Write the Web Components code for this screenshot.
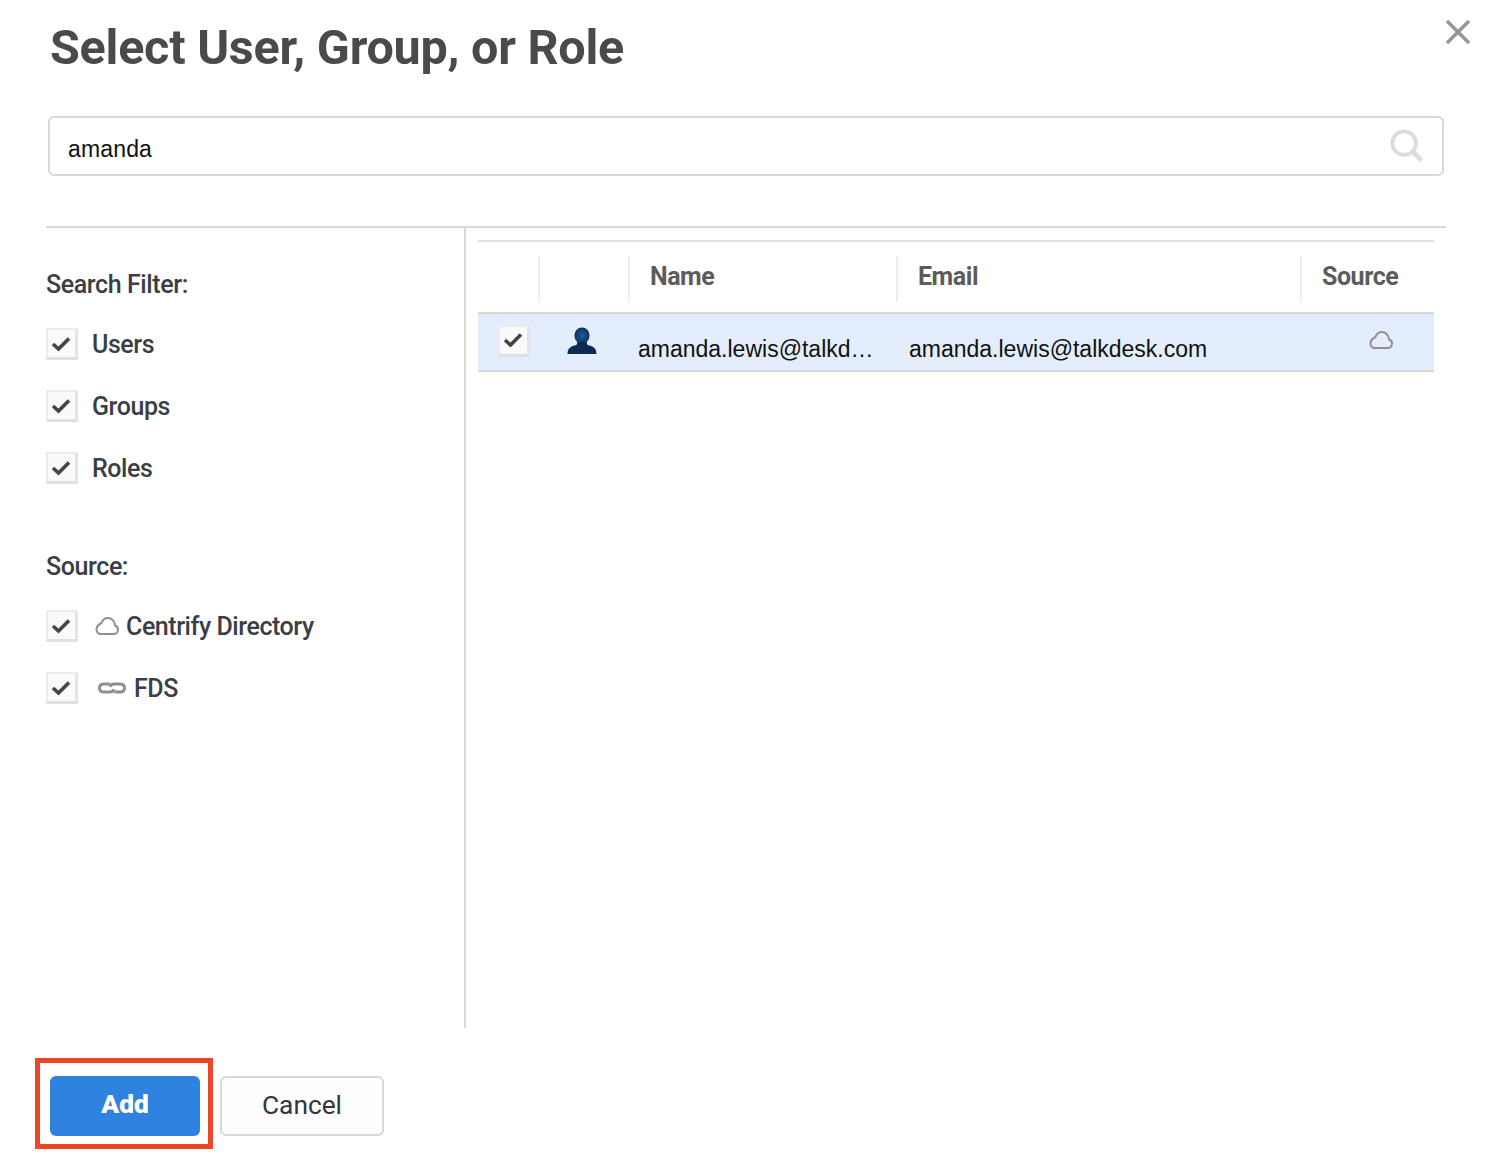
<!DOCTYPE html>
<html>
<head>
<meta charset="utf-8">
<title>Select User, Group, or Role</title>
<style>
html, body { margin: 0; padding: 0; background: #fff; }
body { font-family: Roboto, sans-serif; }
</style>
</head>
<body>
<select-dialog heading="Select User, Group, or Role">
  <search-box slot="search" value="amanda"></search-box>
  <filter-group slot="filters" label="Search Filter:">
    <filter-check>Users</filter-check>
    <filter-check>Groups</filter-check>
    <filter-check>Roles</filter-check>
  </filter-group>
  <filter-group slot="filters" label="Source:" class="source">
    <filter-check icon="cloud">Centrify Directory</filter-check>
    <filter-check icon="link">FDS</filter-check>
  </filter-group>
  <result-table slot="results"></result-table>
  <action-button slot="actions" kind="primary" marked>Add</action-button>
  <action-button slot="actions">Cancel</action-button>
</select-dialog>

<script>
var icons = {
  cloud: `<svg width="24" height="20" viewBox="0 0 24 20" fill="none" stroke="#8f8f8f" stroke-width="2">
    <path d="M6 18 H18.5 C21 18 23 16 23 13.5 C23 11.5 21.5 10 20 9.5 C19.5 5 16.5 2 13 2 C10 2 7.5 4 6.5 7 C3.5 8.5 1.5 11 1.5 13.5 C1.5 16 3.5 18 6 18 Z" stroke-linejoin="round"/>
  </svg>`,
  link: `<svg width="32" height="14" viewBox="0 0 32 14" fill="none" stroke="#8f8f8f" stroke-width="3">
    <path d="M15 3 H9 C6 3 4.5 4.8 4.5 7 C4.5 9.2 6 11 9 11 H15 C17 11 18.5 9.8 19 8.2"/>
    <path d="M19.5 11 H25 C28 11 29.5 9.2 29.5 7 C29.5 4.8 28 3 25 3 H19 C17 3 15.5 4.2 15 5.8"/>
  </svg>`,
  check: `<svg width="20" height="16" viewBox="0 0 20 16" fill="none" stroke="#444" stroke-width="3.6" style="filter: blur(.4px); margin-left: -2px">
    <path d="M2 8 L7.5 13 L18 2.5"/>
  </svg>`
};

class SelectDialog extends HTMLElement {
  constructor() {
    super();
    var root = this.attachShadow({ mode: "open" });
    root.innerHTML = `
<style>
:host { display: block; position: relative; width: 1500px; height: 1166px; box-sizing: border-box; padding: 0 54px 0 46px; background: #fff; }
h1 { margin: 0; padding: 18px 0 0 4px; height: 116px; box-sizing: border-box; font: 700 48.5px/60px Roboto, sans-serif; letter-spacing: -.24px; color: #4a4a4a; white-space: nowrap; }
.close { position: absolute; left: 1445px; top: 19px; width: 26px; height: 26px; }
.search { padding: 0 2px; height: 110px; }
.body { display: grid; grid-template-columns: 418px 2px 1fr; height: 802px; border-top: 2px solid #d8d8d8; box-sizing: border-box; }
.rule { background: #d8d8d8; }
.left { padding-top: 41px; }
.right { padding: 12px 12px 0 12px; }
.actions { display: flex; gap: 20px; padding: 48px 0 0 4px; }
</style>
<h1></h1>
<svg class="close" viewBox="0 0 26 26" fill="none" stroke="#969696" stroke-width="3.4"><path d="M2 2 L24 24 M24 2 L2 24"/></svg>
<div class="search"><slot name="search"></slot></div>
<div class="body">
  <div class="left"><slot name="filters"></slot></div>
  <div class="rule"></div>
  <div class="right"><slot name="results"></slot></div>
</div>
<div class="actions"><slot name="actions"></slot></div>`;
    root.querySelector("h1").textContent = this.getAttribute("heading");
  }
}
customElements.define("select-dialog", SelectDialog);

class SearchBox extends HTMLElement {
  constructor() {
    super();
    var root = this.attachShadow({ mode: "open" });
    root.innerHTML = `
<style>
:host { display: flex; align-items: center; justify-content: space-between; box-sizing: border-box; width: 1396px; height: 60px; padding: 7px 18px 0 18px; border: 2px solid #d8d8d8; border-radius: 6px; font: 23px "Liberation Sans", Arial, sans-serif; letter-spacing: .15px; color: #111; }
svg { margin-top: -7px; }
</style>
<span></span>
<svg width="34" height="34" viewBox="0 0 36 36" fill="none" stroke="#dcdcdc"><circle cx="15" cy="15" r="12.5" stroke-width="4"/><path d="M24 24 L33.5 33" stroke-width="5"/></svg>`;
    root.querySelector("span").textContent = this.getAttribute("value");
  }
}
customElements.define("search-box", SearchBox);

class FilterGroup extends HTMLElement {
  constructor() {
    super();
    var root = this.attachShadow({ mode: "open" });
    root.innerHTML = `
<style>
:host { display: block; margin-bottom: 52px; }
.label { font: 500 25px/30px Roboto, sans-serif; letter-spacing: -.4px; color: #3b3e45; padding-top: 1px; margin-bottom: 13px; }
</style>
<div class="label"></div>
<slot></slot>`;
    root.querySelector(".label").textContent = this.getAttribute("label");
  }
}
customElements.define("filter-group", FilterGroup);

class CheckMark extends HTMLElement {
  constructor() {
    super();
    var root = this.attachShadow({ mode: "open" });
    root.innerHTML = `
<style>
:host { display: flex; align-items: center; justify-content: center; box-sizing: border-box; width: 32px; height: 32px; background: #fafafa; border: 2px solid #ececec; border-right: 3px solid #e4e4e4; border-bottom: 3px solid #e0e0e0; }
</style>${icons.check}`;
  }
}
customElements.define("check-mark", CheckMark);

class FilterCheck extends HTMLElement {
  constructor() {
    super();
    var root = this.attachShadow({ mode: "open" });
    var icon = this.getAttribute("icon");
    root.innerHTML = `
<style>
:host { display: flex; align-items: center; height: 62px; font: 500 25px/32px Roboto, sans-serif; letter-spacing: -.44px; color: #3b3e45; }
check-mark { margin-right: 14px; }
.icon { display: flex; margin: 0 7px 0 3px; }
.text { padding-top: 2px; }
</style>
<check-mark></check-mark>
${icon ? `<span class="icon">${icons[icon]}</span>` : ""}
<span class="text"><slot></slot></span>`;
  }
}
customElements.define("filter-check", FilterCheck);

class ResultTable extends HTMLElement {
  constructor() {
    super();
    var root = this.attachShadow({ mode: "open" });
    root.innerHTML = `
<style>
:host { display: block; border-top: 2px solid #dedede; }
.head, .row { display: grid; grid-template-columns: 62px 90px 268px 404px 132px; }
.head { height: 70px; align-items: center; font: 700 25px/30px Roboto, sans-serif; letter-spacing: -.45px; color: #5c5c5c; }
.head > div { height: 46px; margin-top: 4px; padding-bottom: 4px; box-sizing: border-box; display: flex; align-items: center; padding-left: 20px; border-right: 2px solid #eeeeee; }
.head > div:last-child { border-right: 0; padding-left: 20px; }
.row { height: 60px; box-sizing: border-box; background: #e3edfb; border-top: 2px solid #d8d8d8; border-bottom: 2px solid #d8d8d8; font: 23px/30px "Liberation Sans", Arial, sans-serif; color: #111; }
.row > div { display: flex; align-items: center; min-width: 0; white-space: nowrap; }
.tick { padding: 0 0 3px 20px; }
.person { padding: 0 0 0 27px; }
.name { padding: 14px 0 0 8px; }
.email { padding: 14px 0 0 11px; }
.src { padding: 0 0 4px 67px; }
</style>
<div class="head"><div></div><div></div><div>Name</div><div>Email</div><div>Source</div></div>
<div class="row">
  <div class="tick"><check-mark></check-mark></div>
  <div class="person"><svg width="30" height="28" viewBox="0 0 30 28" style="margin-top:-3px; filter: blur(.4px)"><defs><radialGradient id="g" cx=".5" cy=".5" r=".6"><stop offset="0" stop-color="#1f5a94"/><stop offset="1" stop-color="#0d2a55"/></radialGradient></defs><ellipse cx="15" cy="8.5" rx="7.6" ry="8" fill="url(#g)"/><path d="M10.5 15 H19.5 L20.5 18 C26 19 29.5 21 29.5 27 H.5 C.5 21 4 19 9.5 18 Z" fill="#0d2a55"/></svg></div>
  <div class="name">amanda.lewis@talkd…</div>
  <div class="email">amanda.lewis@talkdesk.com</div>
  <div class="src">${icons.cloud}</div>
</div>`;
  }
}
customElements.define("result-table", ResultTable);

class ActionButton extends HTMLElement {
  constructor() {
    super();
    var root = this.attachShadow({ mode: "open" });
    root.innerHTML = `
<style>
:host { display: flex; position: relative; align-items: center; justify-content: center; box-sizing: border-box; width: 164px; height: 60px; padding-bottom: 3px; border: 2px solid #d8d8d8; border-radius: 6px; background: #fdfdfd; font: 400 26.3px Roboto, sans-serif; color: #33363c; }
:host([kind="primary"]) { width: 150px; border: 0; background: #2f82e0; color: #fff; font-weight: 900; padding-bottom: 4px; }
.mark { position: absolute; left: -15px; top: -18px; width: 178px; height: 91px; box-sizing: border-box; border: 5px solid #ee4528; }
</style>
<slot></slot>${this.hasAttribute("marked") ? `<div class="mark"></div>` : ""}`;
  }
}
customElements.define("action-button", ActionButton);
</script>
</body>
</html>
